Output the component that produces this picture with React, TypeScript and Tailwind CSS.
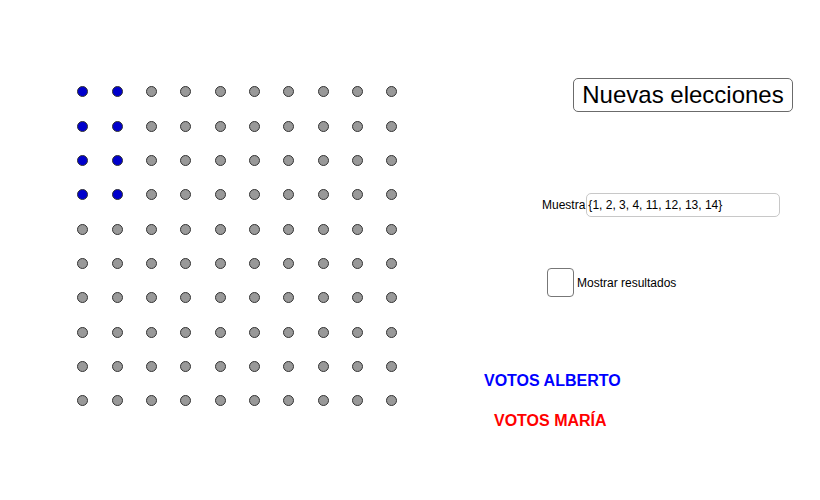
import React from 'react';

// Muestra: indices (1-based) of the voters that were sampled
const muestra = [1, 2, 3, 4, 11, 12, 13, 14];

function Dot({ sampled }: { sampled: boolean }) {
  return (
    <div className="flex items-center justify-center w-[34.33px] h-[34.33px]">
      <div
        className={`w-[11px] h-[11px] rounded-full border border-[#333] ${
          sampled ? 'bg-[#0000cc]' : 'bg-[#999999]'
        }`}
      />
    </div>
  );
}

export default function App() {
  const dots = Array.from({ length: 100 }, (_, i) => {
    // column-major numbering: 1..10 down the first column, 11..20 down the second
    const row = Math.floor(i / 10);
    const col = i % 10;
    const n = col * 10 + row + 1;
    return <Dot key={i} sampled={muestra.includes(n)} />;
  });

  return (
    <div
      className="w-[820px] h-[500px] bg-white flex text-black overflow-hidden"
      style={{ fontFamily: '"Liberation Sans", Arial, sans-serif' }}
    >
      {/* voters grid */}
      <div className="pl-[65.8px] pt-[74.8px] w-[484px] shrink-0">
        <div className="grid grid-cols-[repeat(10,34.33px)]">{dots}</div>
      </div>

      {/* controls */}
      <div className="flex flex-col flex-1">
        <button className="mt-[78px] ml-[89px] w-[220px] h-[34px] border border-[#6b6b6b] rounded-[5px] bg-white text-[24px] leading-none text-black flex items-center justify-center">
          Nuevas elecciones
        </button>

        <div className="mt-[81px] ml-[58px] flex items-center h-[24px]">
          <span className="text-[12px] mr-[1px]">Muestra</span>
          <div className="w-[194px] h-[24px] border border-[#c8c8c8] rounded-[5px] flex items-center pl-[1px] text-[12px]">
            {'{'}
            {muestra.join(', ')}
            {'}'}
          </div>
        </div>

        <div className="mt-[51px] ml-[63px] flex items-center">
          <div className="w-[27px] h-[29px] border border-[#777] rounded-[4px] bg-white" />
          <span className="text-[12px] ml-[3px]">Mostrar resultados</span>
        </div>

        <div className="mt-[74px] ml-[0px] text-[16px] font-bold text-[#0000ff] leading-[20px]">
          VOTOS ALBERTO
        </div>
        <div className="mt-[20px] ml-[10px] text-[16px] font-bold text-[#ff0000] leading-[20px]">
          VOTOS MARÍA
        </div>
      </div>
    </div>
  );
}
